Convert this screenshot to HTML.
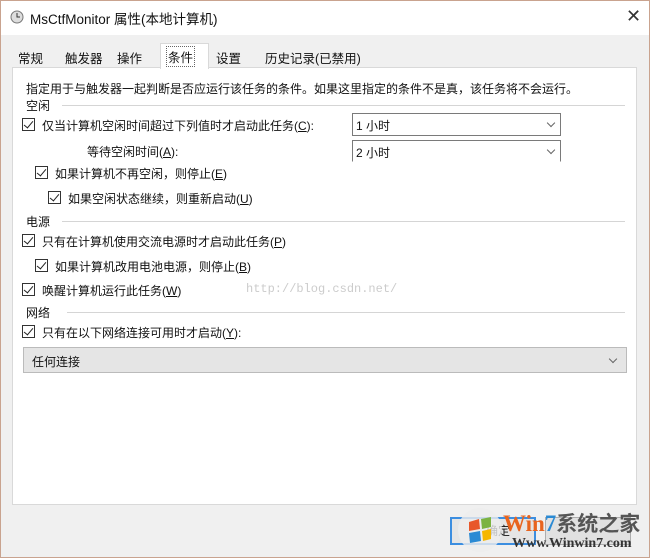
<!DOCTYPE html>
<html><head><meta charset="utf-8"><style>
*{margin:0;padding:0;box-sizing:border-box}
body{width:650px;height:558px;overflow:hidden;background:#f0f0f0;font-family:"Liberation Sans","Noto Sans CJK SC",sans-serif;font-size:12px;color:#111;position:relative}
.a{position:absolute;white-space:nowrap}
.win{position:absolute;left:0;top:0;width:650px;height:558px;border:1px solid #c9a38f}
.title{position:absolute;left:1px;top:1px;width:648px;height:34px;background:#fff}
.panel{position:absolute;left:12px;top:67px;width:625px;height:438px;background:#fff;border:1px solid #d9d9d9}
.cb{position:absolute;width:13px;height:13px;border:1px solid #333;background:#fff}
.cb:after{content:"";position:absolute;left:3px;top:0px;width:4px;height:8px;border-right:1.5px solid #222;border-bottom:1.5px solid #222;transform:rotate(40deg)}
.line{position:absolute;height:1px;background:#d5d5d5}
.dd{position:absolute;border:1px solid #7a7a7a;background:#fff;font-size:12px;padding:3px 0 0 3px}
.chev{position:absolute;right:6px;top:6px;width:6px;height:6px;border-right:1px solid #666;border-bottom:1px solid #666;transform:rotate(45deg)}
.tab{position:absolute;font-size:12.5px}
</style></head><body>
<div class="win"></div>
<div class="title"></div>
<svg class="a" style="left:10px;top:10px" width="14" height="14"><circle cx="7" cy="7" r="6" fill="#ddd" stroke="#777"/><path d="M7 3V7H10" stroke="#333" fill="none"/></svg>
<div class="a" style="left:30px;top:8px;font-size:13.5px">MsCtfMonitor 属性(本地计算机)</div>
<div class="a" style="left:626px;top:6px;font-size:18px;color:#333">✕</div>
<div class="tab a" style="left:18px;top:48px">常规</div>
<div class="tab a" style="left:65px;top:48px">触发器</div>
<div class="tab a" style="left:117px;top:48px">操作</div>
<div class="a" style="left:160px;top:43px;width:49px;height:26px;background:#fff;border:1px solid #d9d9d9;border-bottom:none;z-index:2"></div>
<div class="a" style="left:166px;top:46px;font-size:12.5px;z-index:3;border:1px dotted #666;padding:0 1px">条件</div>
<div class="tab a" style="left:216px;top:48px">设置</div>
<div class="tab a" style="left:265px;top:48px">历史记录(已禁用)</div>
<div class="panel"></div>
<div class="a" style="left:26px;top:80px">指定用于与触发器一起判断是否应运行该任务的条件。如果这里指定的条件不是真，该任务将不会运行。</div>
<div class="a" style="left:26px;top:97px">空闲</div><div class="line" style="left:62px;top:105px;width:563px"></div>
<div class="cb" style="left:22px;top:118px"></div><div class="a" style="left:42px;top:117px">仅当计算机空闲时间超过下列值时才启动此任务(<u>C</u>):</div>
<div class="dd" style="left:352px;top:113px;width:209px;height:23px">1 小时<div class="chev"></div></div>
<div class="a" style="left:87px;top:143px">等待空闲时间(<u>A</u>):</div>
<div class="dd" style="left:352px;top:140px;width:209px;height:22px;border-bottom-color:#fff">2 小时<div class="chev"></div></div>
<div class="cb" style="left:35px;top:166px"></div><div class="a" style="left:55px;top:165px">如果计算机不再空闲，则停止(<u>E</u>)</div>
<div class="cb" style="left:48px;top:191px"></div><div class="a" style="left:68px;top:190px">如果空闲状态继续，则重新启动(<u>U</u>)</div>
<div class="a" style="left:26px;top:213px">电源</div><div class="line" style="left:62px;top:221px;width:563px"></div>
<div class="cb" style="left:22px;top:234px"></div><div class="a" style="left:42px;top:233px">只有在计算机使用交流电源时才启动此任务(<u>P</u>)</div>
<div class="cb" style="left:35px;top:259px"></div><div class="a" style="left:55px;top:258px">如果计算机改用电池电源，则停止(<u>B</u>)</div>
<div class="cb" style="left:22px;top:283px"></div><div class="a" style="left:42px;top:282px">唤醒计算机运行此任务(<u>W</u>)</div>
<div class="a" style="left:246px;top:282px;font-family:'Liberation Mono',monospace;font-size:12px;color:#ccc">http://blog.csdn.net/</div>
<div class="a" style="left:26px;top:304px">网络</div><div class="line" style="left:67px;top:312px;width:558px"></div>
<div class="cb" style="left:22px;top:325px"></div><div class="a" style="left:42px;top:324px">只有在以下网络连接可用时才启动(<u>Y</u>):</div>
<div class="dd" style="left:23px;top:347px;width:604px;height:26px;background:#e5e5e5;border-color:#bbb;padding:5px 0 0 8px">任何连接<div class="chev" style="top:8px;right:10px"></div></div>
<div class="a" style="left:450px;top:517px;width:86px;height:28px;border:2px solid #3c8ee0;background:#e5e5e5"></div>
<div class="a" style="left:545px;top:517px;width:86px;height:28px;border:1px solid #adadad;background:#e1e1e1"></div>
<div class="a" style="left:486px;top:522px;font-size:12px">确定</div>
<svg class="a" style="left:455px;top:506px" width="50" height="48"><circle cx="25" cy="24" r="22" fill="#eee" opacity=".8"/><path d="M14 16l10-3 1 10-11 2z" fill="#e8572a"/><path d="M26 13l10-2v10l-9 2z" fill="#7cb342"/><path d="M14 27l11-2 1 10-11 2z" fill="#2a8ad4"/><path d="M27 25l9-2v10l-8 2z" fill="#f5b700"/></svg>
<div class="a" style="left:503px;top:508px;font-size:23px;font-weight:bold;font-family:'Liberation Serif',serif;color:#e8641e">Win<span style="color:#2a8ad4">7</span><span style="color:#555;font-family:'Noto Sans CJK SC',sans-serif;font-size:21px">系统之家</span></div>
<div class="a" style="left:512px;top:536px;font-size:14px;font-family:'Liberation Serif',serif;color:#333;font-weight:bold">Www.Winwin7.com</div>
</body></html>
